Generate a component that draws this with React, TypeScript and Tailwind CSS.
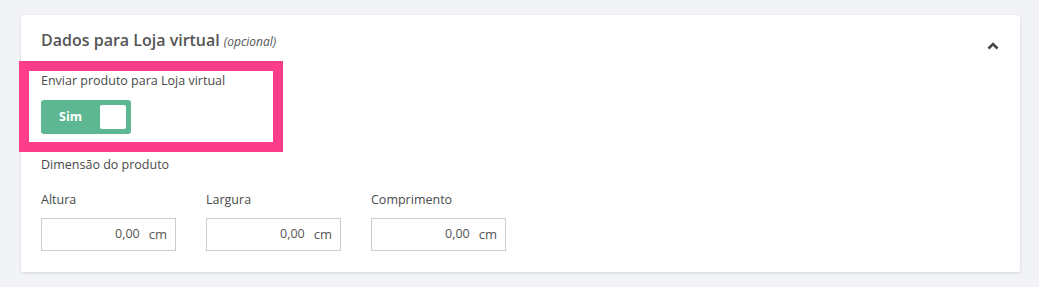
import { useState } from "react";

function DimensionInput({ label }: { label: string }) {
  return (
    <div className="w-[135px]">
      <div className="text-[12.5px] leading-[16px] text-[#4a4a4a]">{label}</div>
      <div className="mt-[10px] flex h-[33px] items-center justify-end border border-[#ccc] bg-white pr-[8px] text-[12.5px] leading-none text-[#555]">
        <span>0,00</span>
        <span className="ml-[9px] text-[13px]">cm</span>
      </div>
    </div>
  );
}

export default function App() {
  const [on, setOn] = useState(true);

  return (
    <div
      className="h-[287px] w-[1039px] bg-[#f2f3f7] pl-[21px] pr-[19px] pt-[15px]"
      style={{ fontFamily: '"Open Sans", "Noto Sans", sans-serif' }}
    >
      <div className="h-[257px] rounded-[2px] bg-white pt-[14px] shadow-[0_1px_3px_rgba(0,0,0,0.12)]">
        <div className="flex h-[24px] items-center justify-between px-[20px]">
          <h2 className="flex items-baseline gap-[4px] text-[16px] font-semibold leading-[24px] text-[#555]">
            <span>Dados para Loja virtual</span>
            <span className="text-[12px] font-normal italic">(opcional)</span>
          </h2>
          <svg width="12" height="8" viewBox="0 0 12 8" className="mr-[1px] mt-[10px]">
            <path d="M1.5 6.5 L6 2 L10.5 6.5" fill="none" stroke="#444" strokeWidth="2.6" />
          </svg>
        </div>

        <div className="-ml-[2px] mt-[8px] w-[264px] border-[10px] border-[#fd3d89] pb-[8px] pl-[12px] pt-[2px]">
          <div className="text-[12.5px] leading-[16px] text-[#4a4a4a]">Enviar produto para Loja virtual</div>
          <button
            onClick={() => setOn(!on)}
            className="mt-[11px] flex h-[34px] w-[90px] items-center justify-between rounded-[3px] bg-[#5eb793] pl-[18px] pr-[5px]"
          >
            <span className="text-[12.5px] font-bold leading-none text-white">Sim</span>
            <span className="h-[24px] w-[26px] rounded-[2px] bg-white" />
          </button>
        </div>

        <div className="px-[20px]">
          <div className="mt-[5px] text-[12.5px] leading-[16px] text-[#4a4a4a]">Dimensão do produto</div>
          <div className="mt-[19px] flex gap-[30px]">
            <DimensionInput label="Altura" />
            <DimensionInput label="Largura" />
            <DimensionInput label="Comprimento" />
          </div>
        </div>
      </div>
    </div>
  );
}
